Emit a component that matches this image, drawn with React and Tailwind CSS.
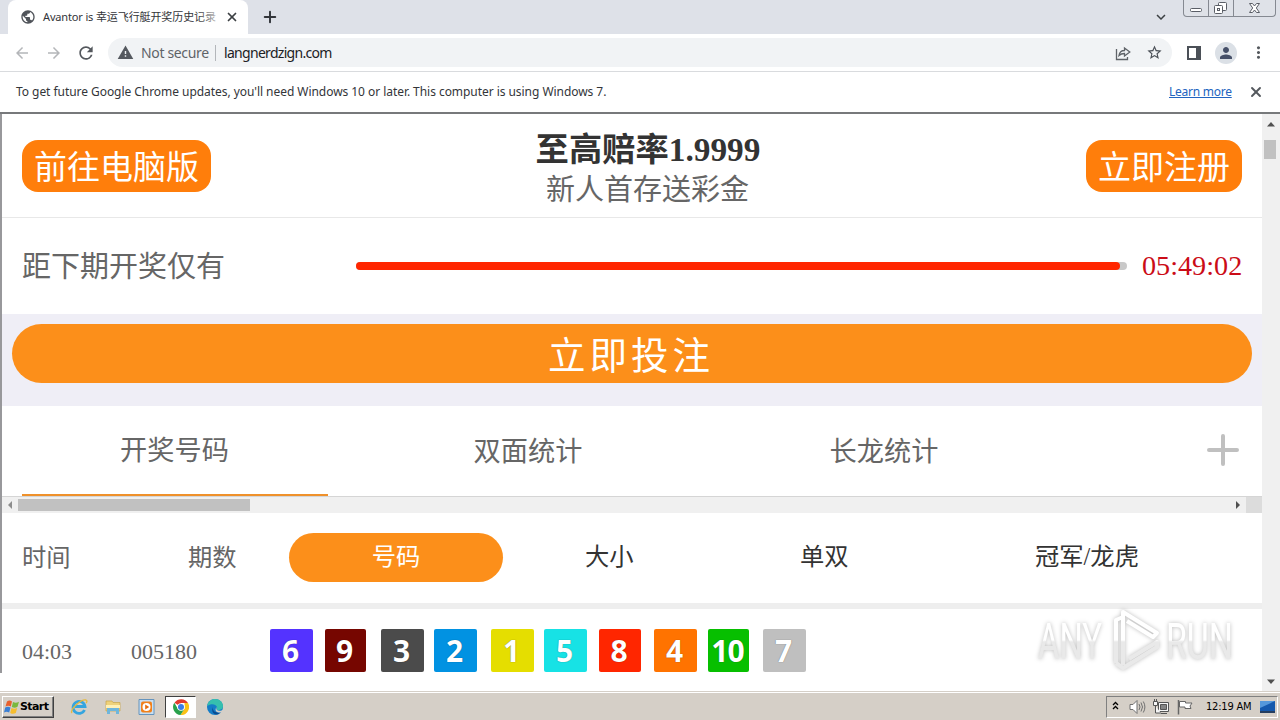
import clsx from "clsx";
import { Plus, X } from "lucide-react";
import {
    MdArrowBack,
    MdArrowForward,
    MdRefresh,
    MdPublic,
    MdWarning,
    MdStarBorder,
    MdPerson,
    MdMoreVert,
    MdKeyboardArrowDown,
} from "react-icons/md";

const balls = [
    { num: 6, style: "w-[43px] bg-[#5433ff]" },
    { num: 9, style: "w-[41px] ml-3 bg-[#760600]" },
    { num: 3, style: "w-[43px] ml-[15px] bg-[#4b4b4b]" },
    { num: 2, style: "w-[43px] ml-[10px] bg-[#0192e2]" },
    { num: 1, style: "w-[43px] ml-[14px] bg-[#e5de00]" },
    { num: 5, style: "w-[43px] ml-[10px] bg-[#17e2e5]" },
    { num: 8, style: "w-[42px] ml-3 bg-[#ff2600]" },
    { num: 4, style: "w-[43px] ml-[13px] bg-[#ff7300]" },
    { num: 10, style: "w-[41px] ml-[11px] bg-[#07bf00]" },
    { num: 7, style: "w-[43px] ml-[14px] bg-[#bfbfbf]" },
];

const WindowButtons = () => (
    <div className="absolute top-0 right-[4px] flex h-[17px] w-[93px] rounded-b-[4px] border border-t-0 border-[#858991] bg-[#dfe2e8]">
        <svg className="h-4 w-full" viewBox="0 0 91 16" fill="#fff" stroke="#5a5e66" strokeWidth="1">
            <path d="M24.5 0V16M49.5 0V16" stroke="#858991" />
            <rect x="6.5" y="8.5" width="11" height="3" rx="1" />
            <rect x="34.5" y="2.5" width="8" height="8" rx="1" />
            <rect x="30.5" y="5.5" width="8" height="8" rx="1" />
            <rect x="33.5" y="8.5" width="2" height="2" />
            <path d="M65.500 3.500h3l2 2.500 2-2.500h3l-3.200 4.500 3.200 4.500h-3l-2-2.500-2 2.500h-3l3.200-4.500z" />
        </svg>
    </div>
);

const TabStrip = () => (
    <div className="relative flex h-[34px] bg-[#dee1e8] pl-2">
        <div className="relative flex h-[34px] w-[240px] items-center rounded-t-lg bg-white pl-3">
            <MdPublic className="h-4 w-4 shrink-0 text-[#50545a]" />
            <div className="ml-[7px] w-[176px] text-[11px] whitespace-nowrap text-[#333539]">
                <span className="tracking-[-0.15px]">Avantor is </span>
                <span className="tracking-[-0.1px]">幸运飞行艇开奖历史记录</span>
            </div>
            <div className="absolute top-2 left-[190px] h-5 w-[21px] bg-gradient-to-r from-transparent to-white/80" />
            <X className="ml-[6px] h-[14px] w-[14px] shrink-0 text-[#3c4043]" strokeWidth={3} />
        </div>
        <Plus className="mt-2 ml-[13px] h-[18px] w-[18px] text-[#33363b]" strokeWidth={2.6} />
        <MdKeyboardArrowDown className="absolute top-2 left-[1152px] h-[18px] w-[18px] text-[#3c4043]" />
        <WindowButtons />
    </div>
);

const Toolbar = () => (
    <div className="flex h-[38px] items-center border-b border-[#d9dbde] bg-white pl-[13px]">
        <MdArrowBack className="h-[18px] w-[18px] text-[#b4b6b9]" />
        <MdArrowForward className="ml-[14px] h-[18px] w-[18px] text-[#b4b6b9]" />
        <MdRefresh className="ml-[13px] h-5 w-5 text-[#54585d]" />
        <div className="ml-3 flex h-[29px] w-[1064px] items-center rounded-full bg-[#f1f3f5] pl-[9px]">
            <MdWarning className="h-[17px] w-[17px] text-[#55595f]" />
            <span className="ml-[7px] w-[68px] text-[14px] tracking-[-0.35px] whitespace-nowrap text-[#5f6368]">Not secure</span>
            <span className="ml-[6px] h-4 w-px bg-[#b3b6ba]" />
            <span className="ml-2 text-[14px] tracking-[-0.7px] text-[#202124]">langnerdzign.com</span>
            <svg className="ml-auto h-4 w-4" viewBox="0 0 16 16" fill="none" stroke="#5f6368" strokeWidth="1.3">
                <path d="M1.500 4v10.500h11V12" />
                <path d="M4 10.500C4.500 7 6.500 5.500 9.500 5.500V3L14.800 7l-5.300 4V8.500C7 8.500 5.500 9 4 10.500z" />
            </svg>
            <MdStarBorder className="mr-[9px] ml-[15px] h-[17px] w-[17px] text-[#4b5057]" />
        </div>
        <svg className="ml-[15px] h-[14px] w-[14px]" viewBox="0 0 14 14">
            <path d="M1 1h12v12H1z" fill="none" stroke="#4b5057" strokeWidth="2" />
            <path d="M9 0h5v14H9z" fill="#4b5057" />
        </svg>
        <div className="ml-[14px] flex h-[22px] w-[22px] items-center justify-center rounded-full bg-[#dbe0e6]">
            <MdPerson className="h-[18px] w-[18px] text-[#465069]" />
        </div>
        <MdMoreVert className="ml-3 h-[19px] w-[19px] text-[#54585d]" />
    </div>
);

const UpdateBar = () => (
    <div className="flex h-10 items-center bg-white pl-4 text-[12px] whitespace-nowrap">
        <span className="w-[1153px] tracking-[-0.05px] text-[#333539]">
            To get future Google Chrome updates, you'll need Windows 10 or later. This computer is using Windows 7.
        </span>
        <span className="w-[63px] tracking-[-0.25px] text-[#2264c0] underline">Learn more</span>
        <X className="ml-4 h-4 w-4 text-[#54585d]" strokeWidth={2.8} />
    </div>
);

const PageHeader = () => (
    <div className="flex h-[104px] items-center border-b border-[#e8e8e8] px-5">
        <div className="h-[52px] w-[189px] rounded-[16px] bg-[#ff7e0b] text-center text-[33px] leading-[56px] text-white">前往电脑版</div>
        <div className="ml-[317px] w-[240px] pt-[11px] text-center">
            <h1 className="text-[33.3px] leading-[38px] font-bold text-[#333]">至高赔率1.9999</h1>
            <p className="pr-px text-[29px] leading-[42px] text-[#666]">新人首存送彩金</p>
        </div>
        <div className="ml-auto h-[52px] w-[156px] rounded-[16px] bg-[#ff7e0b] text-center text-[33px] leading-[56px] text-white">立即注册</div>
    </div>
);

const Countdown = () => (
    <div className="flex h-24 items-center pl-5">
        <span className="w-[334px] pt-[3px] text-[29px] text-[#666]">距下期开奖仅有</span>
        <div className="h-2 w-[771px] rounded-full bg-[#c9c9c9]">
            <div className="h-2 w-[764px] rounded-full bg-[#ff2600]" />
        </div>
        <span className="ml-[15px] text-[28.2px] text-[#cb0c17]">05:49:02</span>
    </div>
);

const BetNow = () => (
    <div className="h-[92px] bg-[#efeef6] px-[10px] pt-[10px]">
        <div className="h-[59px] rounded-full bg-[#fc8f1a] pr-[2px] text-center text-[37.5px] leading-[65px] tracking-[4px] text-white">
            立即投注
        </div>
    </div>
);

const Tabs = () => (
    <div className="flex h-[90px] pl-5 text-[27.2px] text-[#666]">
        <div className="h-[90px] w-[306px] border-b-2 border-[#ef912b] pr-px text-center leading-[90px]">开奖号码</div>
        <div className="ml-[47px] w-[306px] text-center leading-[93px]">双面统计</div>
        <div className="ml-[50px] w-[306px] text-center leading-[93px]">长龙统计</div>
        <svg className="mt-[27px] ml-[169px] h-[34px] w-[34px]" viewBox="0 0 34 34" stroke="#c0c0c0" strokeWidth="4" strokeLinecap="round">
            <path d="M17 3v28M3 17h28" />
        </svg>
    </div>
);

const HorizontalScroll = () => (
    <div className="flex h-[17px] items-center border-t border-[#d5d5d5] bg-[#f0f0f0]">
        <svg className="ml-[5px] h-2 w-[6px]" viewBox="0 0 6 8" fill="#8d8d8d">
            <path d="M5 0v8L1 4z" />
        </svg>
        <div className="ml-[5px] h-3 w-[232px] bg-[#c1c1c1]" />
        <svg className="ml-auto h-2 w-[6px]" viewBox="0 0 6 8" fill="#505050">
            <path d="M1 0v8l4-4z" />
        </svg>
        <div className="ml-[5px] h-4 w-4 bg-[#dcdcdc]" />
    </div>
);

const ColumnHeads = () => (
    <div className="flex h-24 items-center border-b-[6px] border-[#eee] pl-5 text-[24.3px] text-[#333]">
        <span className="w-[166px] text-[#666]">时间</span>
        <span className="w-[101px] text-[#666]">期数</span>
        <span className="mb-[2px] h-[49px] w-[214px] rounded-full bg-[#fc8f1a] text-center leading-[47px] text-white">号码</span>
        <span className="ml-[82px] w-[215px] pb-[2px]">大小</span>
        <span className="w-[235px] pb-[2px]">单双</span>
        <span className="pb-[2px]">冠军/龙虎</span>
    </div>
);

const DrawRow = () => (
    <div className="flex h-[83px] items-center pl-5 text-[22px] text-[#666]">
        <span className="w-[109px] pt-[2px]">04:03</span>
        <span className="w-[139px] pt-[2px]">005180</span>
        {balls.map((ball) => (
            <div
                key={ball.num}
                className={clsx(
                    "h-[43px] shrink-0 rounded-[2px] pr-[2px] text-center font-['Noto_Sans'] text-[30px] leading-[43px] font-bold text-white [text-shadow:0_0_1px_#0008]",
                    ball.num === 10 && "tracking-[-1px]",
                    ball.style
                )}
            >
                {ball.num}
            </div>
        ))}
    </div>
);

const VerticalScroll = () => (
    <div className="flex w-[18px] flex-col items-center bg-[#f0f0f0]">
        <svg className="mt-2 h-[5px] w-2" viewBox="0 0 8 5" fill="#505050">
            <path d="M0 4.500h8L4 0z" />
        </svg>
        <div className="mt-[13px] mr-[3px] h-[19px] w-3 bg-[#c1c1c1]" />
        <svg className="mt-auto mb-[7px] h-[5px] w-2" viewBox="0 0 8 5" fill="#505050">
            <path d="M0 .5h8L4 5z" />
        </svg>
    </div>
);

const Watermark = () => (
    <div className="absolute top-[608px] left-[1036px] h-16 w-[200px]">
        <svg className="h-16 w-[200px] overflow-visible drop-shadow-[0_0_2px_#0004]" viewBox="0 0 200 64">
            <defs>
                <linearGradient id="fade" gradientUnits="userSpaceOnUse" x1="0" y1="0" x2="0" y2="64">
                    <stop offset=".5" stopColor="#fff" />
                    <stop offset=".53" stopColor="#e9e9e9" />
                </linearGradient>
            </defs>
            <g fill="none" stroke="url(#fade)" strokeWidth="4" strokeLinejoin="round">
                <path d="M87 57V4l34 21-4 4-26-16" />
                <path d="M80 55V12l7-3" />
                <path d="M80 55l7 5 34-21v-5L93 51" />
            </g>
            <g fill="url(#fade)" fontFamily="Roboto" fontSize="50">
                <text x="2" y="51" textLength="64" lengthAdjust="spacingAndGlyphs">ANY</text>
                <text x="130" y="51" textLength="67" lengthAdjust="spacingAndGlyphs">RUN</text>
            </g>
        </svg>
    </div>
);

const StartButton = () => (
    <div className="flex h-[22px] w-[52px] items-center border border-t-white border-r-[#404040] border-b-[#404040] border-l-white bg-[#d5cfc7] shadow-[inset_-1px_-1px_#808080]">
        <svg className="ml-[1px] h-4 w-4 shrink-0" viewBox="0 0 16 16">
            <path d="M3 2.500C5 1 6.500 1.500 8 2.500L6.800 7.500C5 6.500 3.500 6.500 1.500 7.500z" fill="#e8602c" />
            <path d="M9 3c2 1 3.500 1 6-.2l-1.500 5C11.500 9 10 9 7.800 8z" fill="#7ab83c" />
            <path d="M1.200 8.500c2-1 3.500-1 5.300 0l-1.300 5c-2-1-3.500-1-5.200 0z" fill="#3a7fd4" />
            <path d="M7.500 9c2 1 3.500 1 5.700 0l-1.400 5c-2 1-3.500 1-5.600-.1z" fill="#f5bd2e" />
        </svg>
        <span className="font-['DejaVu_Sans'] text-[11px] leading-4 font-bold tracking-[-0.6px] text-black">Start</span>
    </div>
);

const TaskIcons = () => (
    <>
        <svg className="ml-[16px] h-[18px] w-[18px]" viewBox="0 0 18 18" fill="none">
            <path d="M14.500 12A6 6 0 1 1 15 8.500H5" stroke="#35a5df" strokeWidth="2.800" />
            <path d="M2 15C-1 12 11 1 16 2c1.500.5 1 2 0 3" stroke="#e6b93c" strokeWidth="1.300" />
        </svg>
        <svg className="ml-4 h-[18px] w-[18px]" viewBox="0 0 18 18">
            <path d="M2 3h6l1 1.500h7V13H2z" fill="#eed27b" stroke="#c9a548" strokeWidth=".7" />
            <path d="M2 7h14v3H2z" fill="#fff0b5" />
            <path d="M3 10h12v6h-3v-3H6v3H3z" fill="#6fb6dc" />
        </svg>
        <svg className="ml-4 h-[18px] w-[17px]" viewBox="0 0 17 18">
            <path d="M1 1.500h15v15H1z" fill="#c8dff2" stroke="#6594bd" />
            <rect x="3" y="3.500" width="11" height="11" rx="2" fill="#f1811b" />
            <circle cx="8.500" cy="9" r="4" fill="#fff" />
            <path d="M7.200 6.500v5l4-2.500z" fill="#e46c0c" />
        </svg>
        <div className="ml-[10px] flex h-[22px] w-[31px] items-center justify-center border border-t-[#404040] border-r-white border-b-white border-l-[#404040] bg-white">
            <svg className="h-4 w-4" viewBox="0 0 16 16">
                <path d="M8 8L1.500 3.700A8 8 0 0 1 15 4H8z" fill="#e23b2e" />
                <path d="M15 4a8 8 0 0 1-7.500 12L11.500 9.500V4z" fill="#fbc116" />
                <path d="M1.300 3.700A8 8 0 0 0 7.500 16l3.800-6L5 10z" fill="#29a14c" />
                <circle cx="8" cy="8" r="3.800" fill="#fff" />
                <circle cx="8" cy="8" r="3" fill="#3b7de8" />
            </svg>
        </div>
        <svg className="ml-[11px] h-4 w-4" viewBox="0 0 16 16">
            <circle cx="8" cy="8" r="8" fill="#147cc7" />
            <path d="M.3 7C1 2 4.500 0 8 0c5 0 8 3.500 8 7 0 3-2.500 4-4.500 4-3 0-1-1.500-1.500-3C9 5 4 4 .3 7z" fill="#36bfae" />
            <path d="M6 8c-1 4 3 6.500 7.500 5.500L11 15.300C6 16 4 12 6 8z" fill="#0b4b91" />
            <path d="M9.500 8c-.8 2.800 1 4 3.500 3.800 1.500 0 2.500-.8 3-1.300v2.500l-2 .5C10 14 7 12 9.500 8z" fill="#d5cfc7" />
        </svg>
    </>
);

const Tray = () => (
    <div className="ml-auto flex h-[22px] w-[172px] items-center border border-t-[#808080] border-r-white border-b-white border-l-[#808080]">
        <svg className="mb-[2px] ml-[5px] h-[9px] w-[7px]" viewBox="0 0 7 9" fill="none" stroke="#000" strokeWidth="1.300">
            <path d="M1 4l2.500-2.500L6 4M1 8l2.500-2.500L6 8" />
        </svg>
        <svg className="ml-[10px] h-4 w-[17px]" viewBox="0 0 17 16" fill="#fff" stroke="#707070">
            <path d="M1 5.500h3l4-4v13l-4-4H1z" />
            <path d="M10 5q2 3 0 6M12 3.500q3 4.500 0 9M14.300 2.500q3.200 5.500 0 11" fill="none" />
        </svg>
        <svg className="ml-[7px] h-4 w-4" viewBox="0 0 16 16" fill="#f5f5f5" stroke="#555">
            <path d="M5.500 3.500h10v9h-10zM8 14.500h6" />
            <path d="M7.500 5.500h6v5h-6z" fill="#858585" />
            <path d="M.5 2.500h4v4h-4zM1.500 0v2M3.500 0v2M2.500 7v7H8" />
        </svg>
        <svg className="ml-2 h-4 w-4" viewBox="0 0 16 16" fill="#fff" stroke="#666">
            <path d="M1.500 1v14.500" strokeWidth="1.500" />
            <path d="M2.500 2.500h6V4H15l-2 3 1 2.500H8V8H2.500z" />
        </svg>
        <span className="ml-[13px] w-[47px] pt-px font-['DejaVu_Sans_Condensed','DejaVu_Sans'] text-[11px] tracking-[-0.2px] whitespace-nowrap text-black">12:19 AM</span>
        <svg className="ml-[7px] h-3 w-[15px] shrink-0" viewBox="0 0 15 12">
            <path d="M0 0h15v12H0z" fill="#1559ad" />
            <path d="M0 0h15L0 7z" fill="#5598db" />
            <path d="M0 10h15v2H0z" fill="#253e60" />
        </svg>
    </div>
);

const Taskbar = () => (
    <div className="flex h-[29px] items-center border-t border-[#d5cfc7] bg-[#d5cfc7] pt-px pr-[2px] pl-[2px] shadow-[inset_0_1px_#fff]">
        <StartButton />
        <TaskIcons />
        <Tray />
    </div>
);

const App = () => {
    return (
        <div className="relative h-[720px] w-[1280px] overflow-hidden bg-white font-['Noto_Sans','Noto_Sans_CJK_SC',sans-serif]">
            <TabStrip />
            <Toolbar />
            <UpdateBar />
            <div className="h-[2px] bg-[#77797b]" />
            <div className="flex h-[577px] font-['Liberation_Serif','Noto_Sans_CJK_SC',sans-serif]">
                <div className="h-[559px] w-[2px] bg-[#98989b]" />
                <div className="w-[1260px] overflow-hidden bg-white">
                    <PageHeader />
                    <Countdown />
                    <BetNow />
                    <Tabs />
                    <HorizontalScroll />
                    <ColumnHeads />
                    <DrawRow />
                </div>
                <VerticalScroll />
            </div>
            <Taskbar />
            <Watermark />
        </div>
    );
};

export default App;
